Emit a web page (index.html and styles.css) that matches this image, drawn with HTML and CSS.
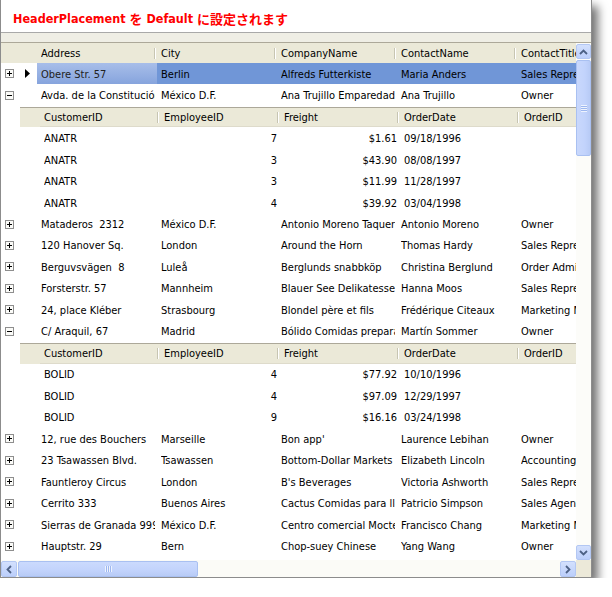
FILE: index.html
```html
<!DOCTYPE html>
<html>
<head>
<meta charset="utf-8">
<link rel="stylesheet" href="styles.css">
</head>
<body>
<div class="window">
  <div class="title">HeaderPlacement <span class="jp">を</span> Default <span class="jp">に設定されます</span></div>
  <div class="band"></div>
  <div class="grid">
    <div class="viewport">
      <div class="header">
        <div class="lead"></div>
        <div class="hc"><span>Address</span></div>
        <div class="hc"><span>City</span></div>
        <div class="hc"><span>CompanyName</span></div>
        <div class="hc"><span>ContactName</span></div>
        <div class="hc"><span>ContactTitle</span></div>
      </div>
      <div class="body">
        <div class="row sel">
          <div class="exp"><svg class="ico" width="9" height="9" viewBox="0 0 9 9"><rect x="0.5" y="0.5" width="8" height="8" class="box"/><path d="M2 4.5h5M4.5 2v5" class="sign"/></svg></div>
          <div class="ind"><svg width="5" height="9" viewBox="0 0 5 9"><path d="M0 0L5 4.5L0 9Z" fill="#000"/></svg></div>
          <div class="cells"><div class="c act"><span>Obere Str. 57</span></div><div class="c"><span>Berlin</span></div><div class="c"><span>Alfreds Futterkiste</span></div><div class="c"><span>Maria Anders</span></div><div class="c"><span>Sales Representative</span></div></div>
        </div>
        <div class="row">
          <div class="exp"><svg class="ico" width="9" height="9" viewBox="0 0 9 9"><rect x="0.5" y="0.5" width="8" height="8" class="box"/><path d="M2 4.5h5" class="sign"/></svg></div>
          <div class="ind"></div>
          <div class="cells"><div class="c"><span>Avda. de la Constitución 2222</span></div><div class="c"><span>México D.F.</span></div><div class="c"><span>Ana Trujillo Emparedados y helados</span></div><div class="c"><span>Ana Trujillo</span></div><div class="c"><span>Owner</span></div></div>
        </div>
        <div class="child">
          <div class="ch">
            <div class="indent"></div>
            <div class="ccols">
              <div class="hc"><span>CustomerID</span></div>
              <div class="hc"><span>EmployeeID</span></div>
              <div class="hc"><span>Freight</span></div>
              <div class="hc"><span>OrderDate</span></div>
              <div class="hc"><span>OrderID</span></div>
            </div>
          </div>
          <div class="crow"><div class="c"><span>ANATR</span></div><div class="c num"><span>7</span></div><div class="c num"><span>$1.61</span></div><div class="c"><span>09/18/1996</span></div><div class="c"><span></span></div></div>
          <div class="crow"><div class="c"><span>ANATR</span></div><div class="c num"><span>3</span></div><div class="c num"><span>$43.90</span></div><div class="c"><span>08/08/1997</span></div><div class="c"><span></span></div></div>
          <div class="crow"><div class="c"><span>ANATR</span></div><div class="c num"><span>3</span></div><div class="c num"><span>$11.99</span></div><div class="c"><span>11/28/1997</span></div><div class="c"><span></span></div></div>
          <div class="crow"><div class="c"><span>ANATR</span></div><div class="c num"><span>4</span></div><div class="c num"><span>$39.92</span></div><div class="c"><span>03/04/1998</span></div><div class="c"><span></span></div></div>
        </div>
        <div class="row">
          <div class="exp"><svg class="ico" width="9" height="9" viewBox="0 0 9 9"><rect x="0.5" y="0.5" width="8" height="8" class="box"/><path d="M2 4.5h5M4.5 2v5" class="sign"/></svg></div>
          <div class="ind"></div>
          <div class="cells"><div class="c"><span>Mataderos  2312</span></div><div class="c"><span>México D.F.</span></div><div class="c"><span>Antonio Moreno Taquería</span></div><div class="c"><span>Antonio Moreno</span></div><div class="c"><span>Owner</span></div></div>
        </div>
        <div class="row">
          <div class="exp"><svg class="ico" width="9" height="9" viewBox="0 0 9 9"><rect x="0.5" y="0.5" width="8" height="8" class="box"/><path d="M2 4.5h5M4.5 2v5" class="sign"/></svg></div>
          <div class="ind"></div>
          <div class="cells"><div class="c"><span>120 Hanover Sq.</span></div><div class="c"><span>London</span></div><div class="c"><span>Around the Horn</span></div><div class="c"><span>Thomas Hardy</span></div><div class="c"><span>Sales Representative</span></div></div>
        </div>
        <div class="row">
          <div class="exp"><svg class="ico" width="9" height="9" viewBox="0 0 9 9"><rect x="0.5" y="0.5" width="8" height="8" class="box"/><path d="M2 4.5h5M4.5 2v5" class="sign"/></svg></div>
          <div class="ind"></div>
          <div class="cells"><div class="c"><span>Berguvsvägen  8</span></div><div class="c"><span>Luleå</span></div><div class="c"><span>Berglunds snabbköp</span></div><div class="c"><span>Christina Berglund</span></div><div class="c"><span>Order Administrator</span></div></div>
        </div>
        <div class="row">
          <div class="exp"><svg class="ico" width="9" height="9" viewBox="0 0 9 9"><rect x="0.5" y="0.5" width="8" height="8" class="box"/><path d="M2 4.5h5M4.5 2v5" class="sign"/></svg></div>
          <div class="ind"></div>
          <div class="cells"><div class="c"><span>Forsterstr. 57</span></div><div class="c"><span>Mannheim</span></div><div class="c"><span>Blauer See Delikatessen</span></div><div class="c"><span>Hanna Moos</span></div><div class="c"><span>Sales Representative</span></div></div>
        </div>
        <div class="row">
          <div class="exp"><svg class="ico" width="9" height="9" viewBox="0 0 9 9"><rect x="0.5" y="0.5" width="8" height="8" class="box"/><path d="M2 4.5h5M4.5 2v5" class="sign"/></svg></div>
          <div class="ind"></div>
          <div class="cells"><div class="c"><span>24, place Kléber</span></div><div class="c"><span>Strasbourg</span></div><div class="c"><span>Blondel père et fils</span></div><div class="c"><span>Frédérique Citeaux</span></div><div class="c"><span>Marketing Manager</span></div></div>
        </div>
        <div class="row">
          <div class="exp"><svg class="ico" width="9" height="9" viewBox="0 0 9 9"><rect x="0.5" y="0.5" width="8" height="8" class="box"/><path d="M2 4.5h5" class="sign"/></svg></div>
          <div class="ind"></div>
          <div class="cells"><div class="c"><span>C/ Araquil, 67</span></div><div class="c"><span>Madrid</span></div><div class="c"><span>Bólido Comidas preparadas</span></div><div class="c"><span>Martín Sommer</span></div><div class="c"><span>Owner</span></div></div>
        </div>
        <div class="child">
          <div class="ch">
            <div class="indent"></div>
            <div class="ccols">
              <div class="hc"><span>CustomerID</span></div>
              <div class="hc"><span>EmployeeID</span></div>
              <div class="hc"><span>Freight</span></div>
              <div class="hc"><span>OrderDate</span></div>
              <div class="hc"><span>OrderID</span></div>
            </div>
          </div>
          <div class="crow"><div class="c"><span>BOLID</span></div><div class="c num"><span>4</span></div><div class="c num"><span>$77.92</span></div><div class="c"><span>10/10/1996</span></div><div class="c"><span></span></div></div>
          <div class="crow"><div class="c"><span>BOLID</span></div><div class="c num"><span>4</span></div><div class="c num"><span>$97.09</span></div><div class="c"><span>12/29/1997</span></div><div class="c"><span></span></div></div>
          <div class="crow"><div class="c"><span>BOLID</span></div><div class="c num"><span>9</span></div><div class="c num"><span>$16.16</span></div><div class="c"><span>03/24/1998</span></div><div class="c"><span></span></div></div>
        </div>
        <div class="row">
          <div class="exp"><svg class="ico" width="9" height="9" viewBox="0 0 9 9"><rect x="0.5" y="0.5" width="8" height="8" class="box"/><path d="M2 4.5h5M4.5 2v5" class="sign"/></svg></div>
          <div class="ind"></div>
          <div class="cells"><div class="c"><span>12, rue des Bouchers</span></div><div class="c"><span>Marseille</span></div><div class="c"><span>Bon app'</span></div><div class="c"><span>Laurence Lebihan</span></div><div class="c"><span>Owner</span></div></div>
        </div>
        <div class="row">
          <div class="exp"><svg class="ico" width="9" height="9" viewBox="0 0 9 9"><rect x="0.5" y="0.5" width="8" height="8" class="box"/><path d="M2 4.5h5M4.5 2v5" class="sign"/></svg></div>
          <div class="ind"></div>
          <div class="cells"><div class="c"><span>23 Tsawassen Blvd.</span></div><div class="c"><span>Tsawassen</span></div><div class="c"><span>Bottom-Dollar Markets</span></div><div class="c"><span>Elizabeth Lincoln</span></div><div class="c"><span>Accounting Manager</span></div></div>
        </div>
        <div class="row">
          <div class="exp"><svg class="ico" width="9" height="9" viewBox="0 0 9 9"><rect x="0.5" y="0.5" width="8" height="8" class="box"/><path d="M2 4.5h5M4.5 2v5" class="sign"/></svg></div>
          <div class="ind"></div>
          <div class="cells"><div class="c"><span>Fauntleroy Circus</span></div><div class="c"><span>London</span></div><div class="c"><span>B's Beverages</span></div><div class="c"><span>Victoria Ashworth</span></div><div class="c"><span>Sales Representative</span></div></div>
        </div>
        <div class="row">
          <div class="exp"><svg class="ico" width="9" height="9" viewBox="0 0 9 9"><rect x="0.5" y="0.5" width="8" height="8" class="box"/><path d="M2 4.5h5M4.5 2v5" class="sign"/></svg></div>
          <div class="ind"></div>
          <div class="cells"><div class="c"><span>Cerrito 333</span></div><div class="c"><span>Buenos Aires</span></div><div class="c"><span>Cactus Comidas para llevar</span></div><div class="c"><span>Patricio Simpson</span></div><div class="c"><span>Sales Agent</span></div></div>
        </div>
        <div class="row">
          <div class="exp"><svg class="ico" width="9" height="9" viewBox="0 0 9 9"><rect x="0.5" y="0.5" width="8" height="8" class="box"/><path d="M2 4.5h5M4.5 2v5" class="sign"/></svg></div>
          <div class="ind"></div>
          <div class="cells"><div class="c"><span>Sierras de Granada 9993</span></div><div class="c"><span>México D.F.</span></div><div class="c"><span>Centro comercial Moctezuma</span></div><div class="c"><span>Francisco Chang</span></div><div class="c"><span>Marketing Manager</span></div></div>
        </div>
        <div class="row">
          <div class="exp"><svg class="ico" width="9" height="9" viewBox="0 0 9 9"><rect x="0.5" y="0.5" width="8" height="8" class="box"/><path d="M2 4.5h5M4.5 2v5" class="sign"/></svg></div>
          <div class="ind"></div>
          <div class="cells"><div class="c"><span>Hauptstr. 29</span></div><div class="c"><span>Bern</span></div><div class="c"><span>Chop-suey Chinese</span></div><div class="c"><span>Yang Wang</span></div><div class="c"><span>Owner</span></div></div>
        </div>
      </div>
    </div>
    <div class="vscroll">
      <div class="sbtn"><svg width="9" height="6" viewBox="0 0 9 6"><path d="M1 5L4.5 1.5L8 5" class="arrow"/></svg></div>
      <div class="vthumb"><span class="grip"></span></div>
      <div class="vtrack"></div>
      <div class="sbtn"><svg width="9" height="6" viewBox="0 0 9 6"><path d="M1 1L4.5 4.5L8 1" class="arrow"/></svg></div>
    </div>
  </div>
  <div class="hscroll">
    <div class="sbtn h"><svg width="6" height="9" viewBox="0 0 6 9"><path d="M5 1L1.5 4.5L5 8" class="arrow"/></svg></div>
    <div class="hthumb"><span class="grip"></span></div>
    <div class="htrack"></div>
    <div class="sbtn h"><svg width="6" height="9" viewBox="0 0 6 9"><path d="M1 1L4.5 4.5L1 8" class="arrow"/></svg></div>
    <div class="corner"></div>
  </div>
</div>
</body>
</html>
```

FILE: styles.css
```css
body {
  margin: 0;
  background: #fff;
}
.window {
  width: 590px;
  height: 577px;
  border: 1px solid #8c8c8c;
  border-top: 0;
  background: #fff;
  box-shadow: 6px 6px 9px rgba(0, 0, 0, 0.55);
  font-family: "DejaVu Sans Condensed", "DejaVu Sans", sans-serif;
  font-stretch: condensed;
  font-size: 11px;
  color: #000;
  display: flex;
  flex-direction: column;
}
.title {
  height: 28px;
  padding: 4px 0 0 12px;
  border-bottom: 1px solid #a9a9a9;
  display: flex;
  align-items: center;
  white-space: pre;
  color: #f00;
  font-weight: bold;
  font-size: 12.5px;
}
.jp {
  font-family: "Noto Sans CJK JP", sans-serif;
  font-size: 13px;
  font-stretch: normal;
}
.band {
  height: 9px;
  background: #efeee5;
  border-bottom: 1px solid #aca899;
}
.grid {
  display: flex;
  height: 517px;
}
.viewport {
  width: 575px;
  overflow: hidden;
}
.header {
  height: 20px;
  background: #ebe9d8;
  display: flex;
}
.lead {
  width: 36px;
  flex: none;
}
.hc {
  width: 120px;
  flex: none;
  display: flex;
  align-items: center;
  padding-left: 4px;
  box-sizing: border-box;
}
.hc span {
  flex: 1;
  overflow: hidden;
  white-space: nowrap;
}
.hc::after {
  content: "";
  width: 1px;
  height: 11px;
  background: #c7c5b2;
  border-right: 1px solid #fff;
  margin-right: 1px;
}
.body {
  height: 497px;
  overflow: hidden;
}
.row, .crow {
  height: 21.47px;
  display: flex;
  align-items: center;
}
.exp {
  width: 19px;
  flex: none;
  display: flex;
  align-items: center;
  padding-left: 4px;
  box-sizing: border-box;
}
.ico .box {
  fill: #fbfbf8;
  stroke: #8e8e8e;
}
.ico .sign {
  stroke: #000;
  stroke-width: 1;
  fill: none;
}
.ind {
  width: 17px;
  flex: none;
  display: flex;
  align-items: center;
  padding-left: 5px;
  box-sizing: border-box;
}
.cells {
  display: flex;
  align-self: stretch;
  align-items: stretch;
  flex: none;
}
.c {
  width: 120px;
  flex: none;
  padding: 1px 0 0 4px;
  box-sizing: border-box;
  display: flex;
  align-items: center;
}
.c span {
  display: block;
  width: 114px;
  overflow: hidden;
  white-space: pre;
}
.c.num span {
  width: 113px;
  text-align: right;
}
.sel .cells {
  background: #7096d7;
}
.sel .c.act {
  background: linear-gradient(#a8bee9, #86a4dd);
  color: #222;
}
.child {
  margin-left: 19px;
}
.ch {
  height: 20.47px;
  margin-top: 1px;
  box-sizing: border-box;
  display: flex;
  background: #ebe9d8;
  border-top: 1px solid #aca899;
}
.indent {
  width: 20px;
  flex: none;
}
.ccols {
  display: flex;
  border-bottom: 1px solid #dedbcb;
}
.crow {
  padding-left: 20px;
}
.vscroll {
  width: 15px;
  display: flex;
  flex-direction: column;
  background: #fcfcf9;
}
.sbtn {
  height: 15px;
  flex: none;
  margin: 1px 0 0;
  background: linear-gradient(#d3e0fd, #bccffb);
  border: 1px solid #b3c7f3;
  border-radius: 2px;
  display: flex;
  align-items: center;
  justify-content: center;
  box-sizing: border-box;
}
.arrow {
  fill: none;
  stroke: #4d6185;
  stroke-width: 1.8;
}
.vthumb {
  height: 96px;
  flex: none;
  margin-top: 1px;
  background: linear-gradient(90deg, #c9d8fc, #c2d3fc 60%, #b8cbf6);
  border: 1px solid #a9c0f1;
  border-radius: 2px;
  box-sizing: border-box;
  display: flex;
  align-items: center;
  justify-content: center;
}
.vthumb .grip {
  width: 6px;
  height: 7px;
  background: repeating-linear-gradient(#eef3fe 0 1px, #9db7ef 1px 2px);
}
.vtrack {
  flex: 1;
}
.hscroll {
  height: 17px;
  display: flex;
  align-items: stretch;
  background: #fbfbf7;
}
.sbtn.h {
  width: 16px;
  height: auto;
  margin: 1px 0 0;
}
.hthumb {
  width: 180px;
  flex: none;
  margin: 1px 0 0 1px;
  background: linear-gradient(#cbdafd, #c2d3fc 60%, #b8cbf6);
  border: 1px solid #a9c0f1;
  border-radius: 2px;
  box-sizing: border-box;
  display: flex;
  align-items: center;
  justify-content: center;
}
.hthumb .grip {
  width: 7px;
  height: 6px;
  background: repeating-linear-gradient(90deg, #eef3fe 0 1px, #9db7ef 1px 2px);
}
.htrack {
  flex: 1;
}
.corner {
  width: 15px;
  flex: none;
  background: #ece9d9;
}
```
